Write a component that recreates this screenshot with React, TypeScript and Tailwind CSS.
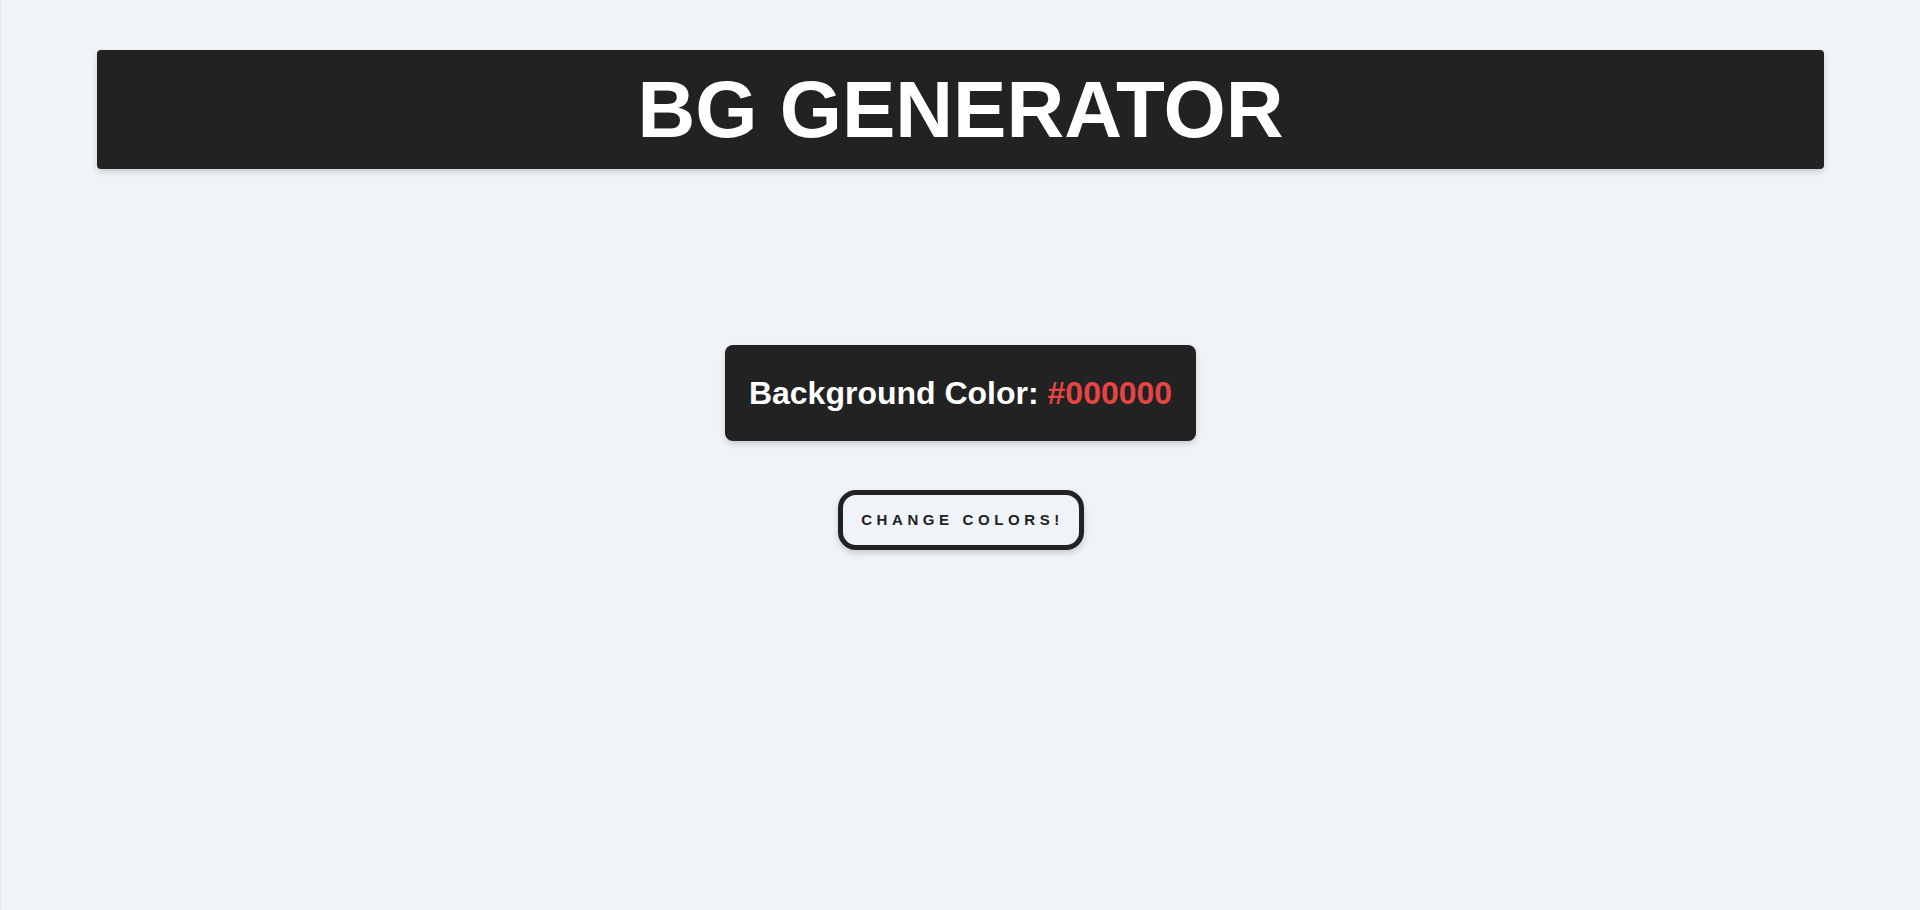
import React, { useState } from "react";

const randomHex = () =>
  "#" +
  Math.floor(Math.random() * 0xffffff)
    .toString(16)
    .padStart(6, "0");

const App = () => {
  const [color] = useState("#000000");

  return (
    <div
      className="min-h-[910px] w-full bg-[#f0f4f8] border-l border-[#e2e8ee] pt-[50px]"
      style={{ fontFamily: '"Liberation Sans", Arial, sans-serif' }}
    >
      <header className="mx-auto w-[90%] h-[119px] rounded-[4px] bg-[#222222] shadow-[0_3px_6px_rgba(0,0,0,0.16)] flex items-center justify-center">
        <h1 className="text-[80px] font-bold text-white leading-none">
          BG GENERATOR
        </h1>
      </header>

      <main className="mt-[176px] flex flex-col items-center">
        <div className="h-[96px] px-6 rounded-lg bg-[#222222] shadow-[0_3px_6px_rgba(0,0,0,0.16)] flex items-center">
          <h2 className="text-[32px] font-bold text-white leading-none">
            Background Color: <span className="text-[#e44545]">{color}</span>
          </h2>
        </div>

        <button
          onClick={() => console.log(randomHex())}
          className="mt-[49px] w-[246px] h-[60px] rounded-[18px] border-[5px] border-[#222222] bg-[#f0f4f8] shadow-[0_3px_6px_rgba(0,0,0,0.18)] flex items-center justify-center pl-[4px] text-[15px] font-bold tracking-[4.6px] text-[#222222]"
        >
          CHANGE COLORS!
        </button>
      </main>
    </div>
  );
};

export default App;
